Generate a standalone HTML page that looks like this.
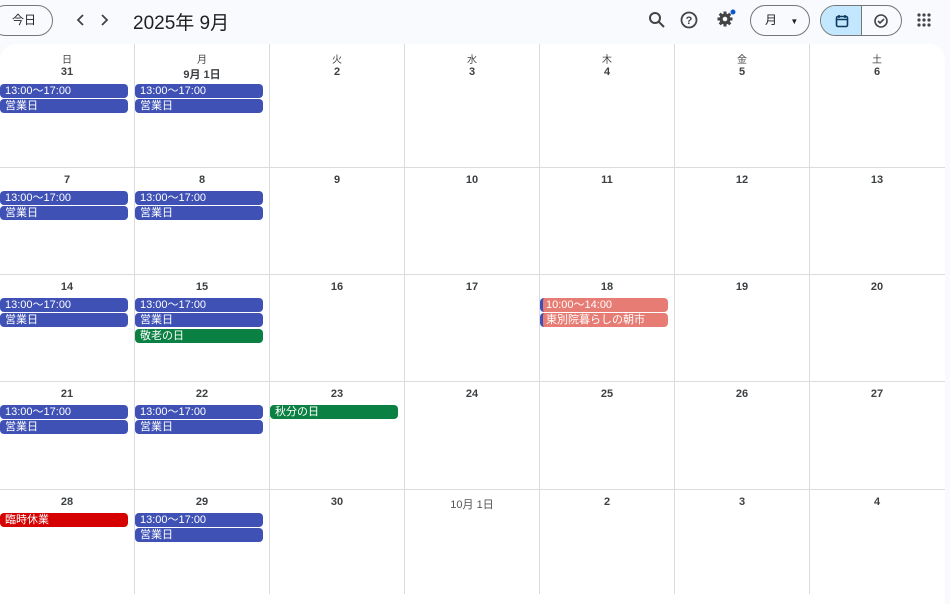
<!DOCTYPE html>
<html><head><meta charset="utf-8"><style>
*{margin:0;padding:0;box-sizing:border-box}
body{width:950px;height:594px;background:#f8fafd;font-family:"Liberation Sans","Noto Sans CJK JP",sans-serif;color:#1f1f1f;position:relative;overflow:hidden}
.a{position:absolute}
.card{position:absolute;left:0;top:44px;width:945px;height:560px;background:#fff;border-radius:16px 16px 0 0}
.vl{position:absolute;top:44px;bottom:0;width:1px;background:#dadce0}
.hl{position:absolute;left:0;width:945px;height:1px;background:#dadce0}
.dn{position:absolute;width:134px;text-align:center;font-size:11px;font-weight:bold;color:#3c4043}
.wd{position:absolute;top:51px;width:134px;text-align:center;font-size:10px;color:#444}
.ev{position:absolute;height:14px;width:128px;border-radius:4px;color:#fff;font-size:11px;line-height:14px;padding-left:5px;white-space:nowrap;overflow:hidden}
.b{background:#3f51b5}.g{background:#0b8043}.r{background:#d50000}.p{background:#e67c73;border-left:3px solid #3f51b5;padding-left:3px}
.btn{position:absolute;border:1px solid #747775;border-radius:18px;height:31px}
</style></head><body>
<div class="btn" style="left:-10px;top:5px;width:63px;font-size:12px;line-height:29px;padding-left:21px">今日</div>
<svg class="a" style="left:74px;top:13px" width="40" height="14"><path d="M9 2L4 7l5 5M28 2l5 5-5 5" stroke="#444" stroke-width="1.8" fill="none"/></svg>
<div class="a" style="left:133px;top:8px;font-size:19px;color:#1f1f1f">2025年 9月</div>
<svg class="a" style="left:648px;top:11px" width="18" height="18"><circle cx="7" cy="7" r="5" stroke="#444" stroke-width="2" fill="none"/><path d="M11 11l5 5" stroke="#444" stroke-width="2"/></svg>
<svg class="a" style="left:680px;top:11px" width="18" height="18"><circle cx="9" cy="9" r="7.5" stroke="#444" stroke-width="1.8" fill="none"/><text x="9" y="13" font-size="11" font-weight="bold" text-anchor="middle" fill="#444" font-family="Liberation Sans">?</text></svg>
<svg class="a" style="left:715px;top:9px" width="22" height="22"><path d="M10 2.5v3M10 14.5v3M2.5 10h3M14.5 10h3M4.7 4.7l2.1 2.1M13.2 13.2l2.1 2.1M4.7 15.3l2.1-2.1M13.2 6.8l2.1-2.1" stroke="#444" stroke-width="3"/><circle cx="10" cy="10" r="5.5" fill="#444"/><circle cx="10" cy="10" r="2.3" fill="#f8fafd"/><circle cx="18" cy="3" r="2.5" fill="#0b57d0"/></svg>
<div class="btn" style="left:750px;top:5px;width:60px;font-size:12px;line-height:29px;padding-left:14px">月 <span style="font-size:8px;margin-left:10px">▼</span></div>
<div class="btn" style="left:820px;top:5px;width:82px;overflow:hidden"><div class="a" style="left:0;top:0;width:41px;height:29px;background:#c2e7ff;border-right:1px solid #747775"></div>
<svg class="a" style="left:14px;top:8px" width="14" height="14"><rect x="1.5" y="2.5" width="11" height="10" rx="1.5" stroke="#0b3a5c" stroke-width="1.6" fill="none"/><path d="M2 5.5h10M4 1v3M10 1v3" stroke="#0b3a5c" stroke-width="1.5"/></svg>
<svg class="a" style="left:52px;top:7px" width="16" height="16"><circle cx="8" cy="8" r="6" stroke="#444" stroke-width="1.6" fill="none"/><path d="M5 8l2 2 4-4" stroke="#444" stroke-width="1.6" fill="none"/></svg></div>
<svg class="a" style="left:917px;top:13px" width="14" height="14" fill="#444"><circle cx="2" cy="2" r="1.6"/><circle cx="7" cy="2" r="1.6"/><circle cx="12" cy="2" r="1.6"/><circle cx="2" cy="7" r="1.6"/><circle cx="7" cy="7" r="1.6"/><circle cx="12" cy="7" r="1.6"/><circle cx="2" cy="12" r="1.6"/><circle cx="7" cy="12" r="1.6"/><circle cx="12" cy="12" r="1.6"/></svg>
<div class="card"></div>
<div class="vl" style="left:134px"></div><div class="vl" style="left:269px"></div><div class="vl" style="left:404px"></div><div class="vl" style="left:539px"></div><div class="vl" style="left:674px"></div><div class="vl" style="left:809px"></div>
<div class="hl" style="top:167px"></div><div class="hl" style="top:274px"></div><div class="hl" style="top:381px"></div><div class="hl" style="top:489px"></div>
<div class="wd" style="left:0">日</div><div class="wd" style="left:135px">月</div><div class="wd" style="left:270px">火</div><div class="wd" style="left:405px">水</div><div class="wd" style="left:540px">木</div><div class="wd" style="left:675px">金</div><div class="wd" style="left:810px">土</div>
<!-- row1 -->
<div class="dn" style="left:0;top:66px">31</div><div class="dn" style="left:135px;top:66px">9月 1日</div><div class="dn" style="left:270px;top:66px">2</div><div class="dn" style="left:405px;top:66px">3</div><div class="dn" style="left:540px;top:66px">4</div><div class="dn" style="left:675px;top:66px">5</div><div class="dn" style="left:810px;top:66px">6</div>
<div class="ev b" style="left:0;top:84px">13:00〜17:00</div><div class="ev b" style="left:0;top:99px">営業日</div>
<div class="ev b" style="left:135px;top:84px">13:00〜17:00</div><div class="ev b" style="left:135px;top:99px">営業日</div>
<!-- row2 -->
<div class="dn" style="left:0;top:174px">7</div><div class="dn" style="left:135px;top:174px">8</div><div class="dn" style="left:270px;top:174px">9</div><div class="dn" style="left:405px;top:174px">10</div><div class="dn" style="left:540px;top:174px">11</div><div class="dn" style="left:675px;top:174px">12</div><div class="dn" style="left:810px;top:174px">13</div>
<div class="ev b" style="left:0;top:191px">13:00〜17:00</div><div class="ev b" style="left:0;top:206px">営業日</div>
<div class="ev b" style="left:135px;top:191px">13:00〜17:00</div><div class="ev b" style="left:135px;top:206px">営業日</div>
<!-- row3 -->
<div class="dn" style="left:0;top:281px">14</div><div class="dn" style="left:135px;top:281px">15</div><div class="dn" style="left:270px;top:281px">16</div><div class="dn" style="left:405px;top:281px">17</div><div class="dn" style="left:540px;top:281px">18</div><div class="dn" style="left:675px;top:281px">19</div><div class="dn" style="left:810px;top:281px">20</div>
<div class="ev b" style="left:0;top:298px">13:00〜17:00</div><div class="ev b" style="left:0;top:313px">営業日</div>
<div class="ev b" style="left:135px;top:298px">13:00〜17:00</div><div class="ev b" style="left:135px;top:313px">営業日</div><div class="ev g" style="left:135px;top:329px">敬老の日</div>
<div class="ev p" style="left:540px;top:298px">10:00〜14:00</div><div class="ev p" style="left:540px;top:313px">東別院暮らしの朝市</div>
<!-- row4 -->
<div class="dn" style="left:0;top:388px">21</div><div class="dn" style="left:135px;top:388px">22</div><div class="dn" style="left:270px;top:388px">23</div><div class="dn" style="left:405px;top:388px">24</div><div class="dn" style="left:540px;top:388px">25</div><div class="dn" style="left:675px;top:388px">26</div><div class="dn" style="left:810px;top:388px">27</div>
<div class="ev b" style="left:0;top:405px">13:00〜17:00</div><div class="ev b" style="left:0;top:420px">営業日</div>
<div class="ev b" style="left:135px;top:405px">13:00〜17:00</div><div class="ev b" style="left:135px;top:420px">営業日</div>
<div class="ev g" style="left:270px;top:405px">秋分の日</div>
<!-- row5 -->
<div class="dn" style="left:0;top:496px">28</div><div class="dn" style="left:135px;top:496px">29</div><div class="dn" style="left:270px;top:496px">30</div><div class="dn" style="left:405px;top:496px;font-weight:normal;color:#555">10月 1日</div><div class="dn" style="left:540px;top:496px">2</div><div class="dn" style="left:675px;top:496px">3</div><div class="dn" style="left:810px;top:496px">4</div>
<div class="ev r" style="left:0;top:513px">臨時休業</div>
<div class="ev b" style="left:135px;top:513px">13:00〜17:00</div><div class="ev b" style="left:135px;top:528px">営業日</div>
</body></html>
